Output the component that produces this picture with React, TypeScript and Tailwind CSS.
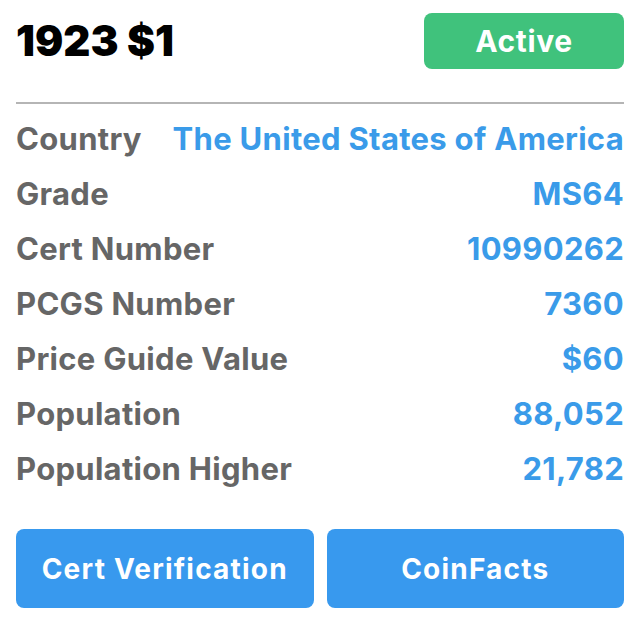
import React from 'react';

interface Row {
  label: string;
  value: string;
}

const rows: Row[] = [
  { label: 'Country', value: 'The United States of America' },
  { label: 'Grade', value: 'MS64' },
  { label: 'Cert Number', value: '10990262' },
  { label: 'PCGS Number', value: '7360' },
  { label: 'Price Guide Value', value: '$60' },
  { label: 'Population', value: '88,052' },
  { label: 'Population Higher', value: '21,782' },
];

export default function App() {
  return (
    <div
      className="w-[640px] h-[618px] bg-white px-4 overflow-hidden"
      style={{ fontFamily: 'Inter, "Noto Sans", sans-serif' }}
    >
      <div className="flex items-center justify-between pt-[14px] h-[104px] border-b-2 border-[#b5b5b5] pb-[34px]">
        <h1 className="text-[42px] font-black text-black leading-none">1923 $1</h1>
        <div className="w-[200px] h-[56px] rounded-lg bg-[#40c27c] flex items-center justify-center text-white text-[30px] font-bold tracking-[0.6px]">
          Active
        </div>
      </div>

      <div className="flex flex-col pt-[8px]">
        {rows.map((row) => (
          <div key={row.label} className="flex items-center justify-between h-[55px] gap-4">
            <span className="text-[31px] font-bold text-[#666666] tracking-[0.3px] whitespace-nowrap">
              {row.label}
            </span>
            <span className="text-[31px] font-bold text-[#3a9be9] tracking-[0.3px] whitespace-nowrap">
              {row.value}
            </span>
          </div>
        ))}
      </div>

      <div className="grid grid-cols-2 gap-[13px] pt-[32px]">
        <button className="h-[79px] rounded-lg bg-[#3899ee] text-white text-[28px] font-bold tracking-[1.2px]">
          Cert Verification
        </button>
        <button className="h-[79px] rounded-lg bg-[#3899ee] text-white text-[28px] font-bold tracking-[1.2px]">
          CoinFacts
        </button>
      </div>
    </div>
  );
}
